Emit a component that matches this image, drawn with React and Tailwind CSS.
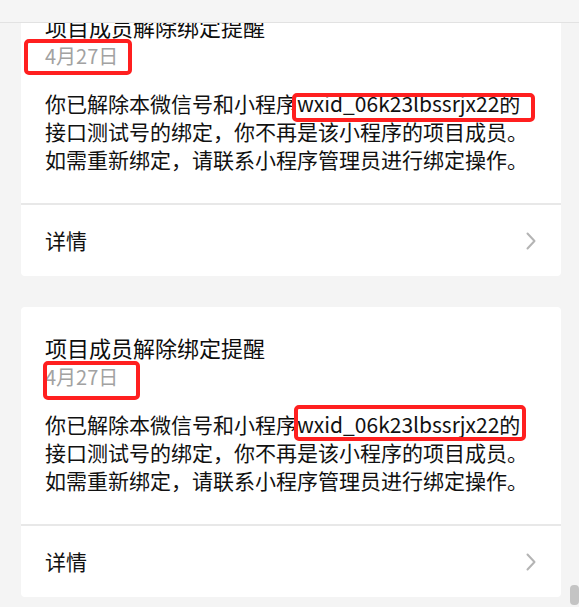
const font = { fontFamily: '"Noto Sans CJK SC", "Noto Sans", sans-serif' };

const cards = [
  {
    id: 1,
    marks: [
      'left-[3px] top-[53px] w-[108px] h-[36px]',
      'left-[271px] top-[107px] w-[243px] h-[29px]',
    ],
  },
  {
    id: 2,
    marks: [
      'left-[22px] top-[54px] w-[97px] h-[39px]',
      'left-[273px] top-[98px] w-[232px] h-[36px]',
    ],
  },
];

function Chevron() {
  return (
    <svg width="10" height="18" viewBox="0 0 10 18" fill="none">
      <polyline points="1.5,1.5 8.5,9 1.5,16.5" stroke="#b4b4b4" strokeWidth="2" strokeLinecap="round" strokeLinejoin="round" />
    </svg>
  );
}

function Card({ marks }) {
  return (
    <div className="relative bg-white rounded-[4px]">
      <div className="px-[24px] pt-[25px] pb-[30px]">
        <div className="text-[22px] leading-[30px] text-[#0d0d0d]">项目成员解除绑定提醒</div>
        <div className="text-[20px] leading-[30px] text-[#a2a2a2]">4月27日</div>
        <div className="mt-[18px] text-[21px] leading-[28px] text-[#111] whitespace-nowrap">
          你已解除本微信号和小程序wxid_06k23lbssrjx22的
          <br />
          接口测试号的绑定，你不再是该小程序的项目成员。
          <br />
          如需重新绑定，请联系小程序管理员进行绑定操作。
        </div>
      </div>
      <div className="h-[2px] bg-[#e8e8e8]" />
      <div className="h-[71px] flex items-center justify-between pl-[24px] pr-[25px]">
        <span className="text-[21px] text-[#111]">详情</span>
        <Chevron />
      </div>

      {/* red annotation boxes */}
      {marks.map((m) => (
        <div key={m} className={`absolute border-[4px] border-[#ff1f1f] rounded-[5px] ${m}`} />
      ))}
    </div>
  );
}

export default function App() {
  return (
    <div className="relative w-[579px] h-[607px] overflow-hidden bg-[#f4f4f4]" style={font}>
      <div className="-mt-[14px] pl-[21px] pr-[18px] flex flex-col gap-[31px]">
        {cards.map((c) => (
          <Card key={c.id} marks={c.marks} />
        ))}
      </div>

      {/* top bar */}
      <div className="absolute top-0 left-0 w-full h-[23px] bg-[#f5f5f5] border-b border-[#e2e2e2]" />

      {/* scrollbar thumb */}
      <div className="absolute right-0 top-[585px] w-[9px] h-[20px] rounded-[4px] bg-[#c4c4c4]" />
    </div>
  );
}
